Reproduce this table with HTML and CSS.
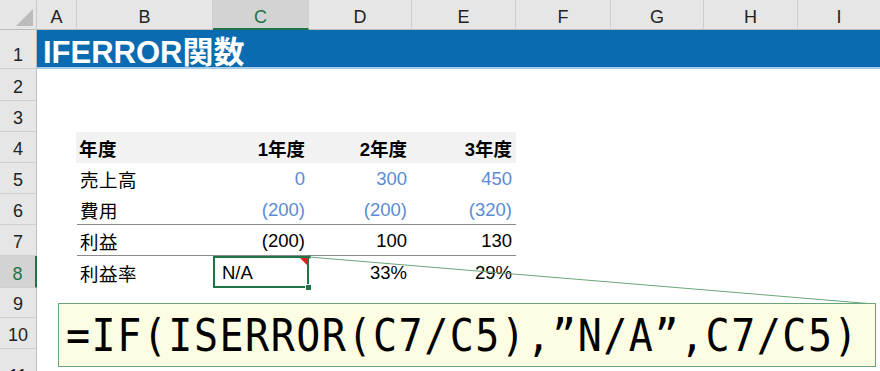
FILE: index.html
```html
<!DOCTYPE html>
<html lang="ja">
<head>
<meta charset="utf-8">
<title>IFERROR関数</title>
<link rel="stylesheet" href="styles.css">
</head>
<body>
<div class="sheet">
  <div class="grid">
    <div class="corner"><span class="corner-tri"></span></div>
    <div class="ch">A</div>
    <div class="ch">B</div>
    <div class="ch ch-sel">C</div>
    <div class="ch">D</div>
    <div class="ch">E</div>
    <div class="ch">F</div>
    <div class="ch">G</div>
    <div class="ch">H</div>
    <div class="ch ch-last">I</div>

    <div class="rh">1</div>
    <div class="title">IFERROR関数</div>

    <div class="rh">2</div>
    <div class="rh">3</div>

    <div class="rh">4</div>
    <div class="c cb head lbl">年度</div>
    <div class="c cc head">1年度</div>
    <div class="c cd head">2年度</div>
    <div class="c ce head">3年度</div>

    <div class="rh">5</div>
    <div class="c cb lbl">売上高</div>
    <div class="c cc blue">0</div>
    <div class="c cd blue">300</div>
    <div class="c ce blue">450</div>

    <div class="rh">6</div>
    <div class="c cb lbl rule">費用</div>
    <div class="c cc blue rule">(200)</div>
    <div class="c cd blue rule">(200)</div>
    <div class="c ce blue rule">(320)</div>

    <div class="rh">7</div>
    <div class="c cb lbl rule">利益</div>
    <div class="c cc rule">(200)</div>
    <div class="c cd rule">100</div>
    <div class="c ce rule">130</div>

    <div class="rh rh-sel">8</div>
    <div class="c cb lbl">利益率</div>
    <div class="c cc sel">N/A<span class="comment-mark"></span><span class="handle"></span></div>
    <div class="c cd">33%</div>
    <div class="c ce">29%</div>

    <div class="rh">9</div>
    <div class="rh">10</div>
    <div class="rh rh-end">11</div>
  </div>

  <svg class="connector" width="880" height="371" viewBox="0 0 880 371">
    <line x1="309" y1="257" x2="874" y2="304" stroke="#6aa57a" stroke-width="1"/>
    <rect x="307.5" y="255.5" width="3" height="3" fill="#217346"/>
  </svg>

  <div class="comment"><span class="formula">=IF(ISERROR(C7/C5),”N/A”,C7/C5)</span></div>
</div>
</body>
</html>
```
FILE: styles.css
```css
html, body {
  margin: 0;
  padding: 0;
  background: #ffffff;
}

.sheet {
  position: relative;
  width: 880px;
  height: 371px;
  overflow: hidden;
  font-family: "Liberation Sans", Arial, "Noto Sans CJK JP", sans-serif;
  color: #000;
}

.grid {
  display: grid;
  grid-template-columns: 37px 40px 136px 96px 103px 104px 95px 93px 94px 82px;
  grid-template-rows: 30px 39px 32px 31px 31px 31px 31px 31px 32px 30px 31px 40px;
}

/* headers */
.corner {
  grid-column: 1;
  background: #e6e6e6;
  border-right: 1px solid #c8c8c8;
  border-bottom: 1px solid #bdbdbd;
  position: relative;
}
.corner-tri {
  position: absolute;
  right: 3px;
  bottom: 3px;
  width: 0;
  height: 0;
  border-left: 17px solid transparent;
  border-bottom: 17px solid #bcbcbc;
}

.ch {
  background: #e6e6e6;
  border-right: 1px solid #cfcfcf;
  border-bottom: 1px solid #bdbdbd;
  display: flex;
  align-items: flex-end;
  justify-content: center;
  padding-bottom: 1px;
  font-size: 18px;
  color: #222;
}
.ch-last { border-right: none; }
.ch-sel {
  background: #d3d3d3;
  color: #217346;
  border-bottom: 2px solid #217346;
  padding-bottom: 0;
}

.rh {
  grid-column: 1;
  background: #e6e6e6;
  border-right: 1px solid #bdbdbd;
  border-bottom: 1px solid #cfcfcf;
  display: flex;
  align-items: flex-end;
  justify-content: center;
  padding-bottom: 2px;
  font-size: 18px;
  color: #222;
}
.rh-sel {
  background: #d3d3d3;
  color: #217346;
  border-right: 2px solid #217346;
}
.rh-end { border-bottom: none; }

/* title band */
.title {
  grid-column: 2 / -1;
  background: #0a6bb0;
  border-bottom: 2px solid #a9cbe8;
  color: #fff;
  font-weight: bold;
  font-size: 31px;
  display: flex;
  align-items: center;
  padding-left: 6px;
  padding-top: 1px;
}

/* table cells */
.c {
  display: flex;
  align-items: center;
  justify-content: flex-end;
  font-size: 18.5px;
  padding: 1px 4px 0 4px;
  position: relative;
}
.cb { grid-column: 3; }
.cc { grid-column: 4; }
.cd { grid-column: 5; padding-right: 5px; }
.ce { grid-column: 6; }
.lbl {
  justify-content: flex-start;
  padding-left: 3px;
  letter-spacing: 0.5px;
}
.head {
  background: #f2f2f2;
  font-weight: bold;
}
.cb.head { margin-left: -1px; }
.blue { color: #5b8bd2; }
.rule { border-bottom: 1px solid #8a8a8a; }

.sel {
  justify-content: flex-start;
  padding-left: 9px;
  outline: 2px solid #217346;
  outline-offset: -2px;
}
.comment-mark {
  position: absolute;
  top: 2px;
  right: 2px;
  width: 0;
  height: 0;
  border-left: 7px solid transparent;
  border-top: 7px solid #e0201c;
}
.handle {
  position: absolute;
  right: -2px;
  bottom: -2px;
  width: 5px;
  height: 5px;
  background: #217346;
  border: 1px solid #fff;
  box-sizing: content-box;
  margin: -1px;
}

/* overlays */
.connector {
  position: absolute;
  left: 0;
  top: 0;
  pointer-events: none;
}

.comment {
  position: absolute;
  left: 58px;
  top: 303px;
  width: 818px;
  height: 64px;
  box-sizing: border-box;
  background: #fdfde3;
  border: 1px solid #6aa57a;
  padding: 9px 0 0 7px;
  color: #000;
  white-space: nowrap;
}
.formula {
  display: inline-block;
  font-family: "DejaVu Sans Mono", "Liberation Mono", monospace;
  font-size: 40px;
  line-height: 1;
  letter-spacing: 1.5px;
  transform: scaleY(1.12);
  transform-origin: left top;
}
```
